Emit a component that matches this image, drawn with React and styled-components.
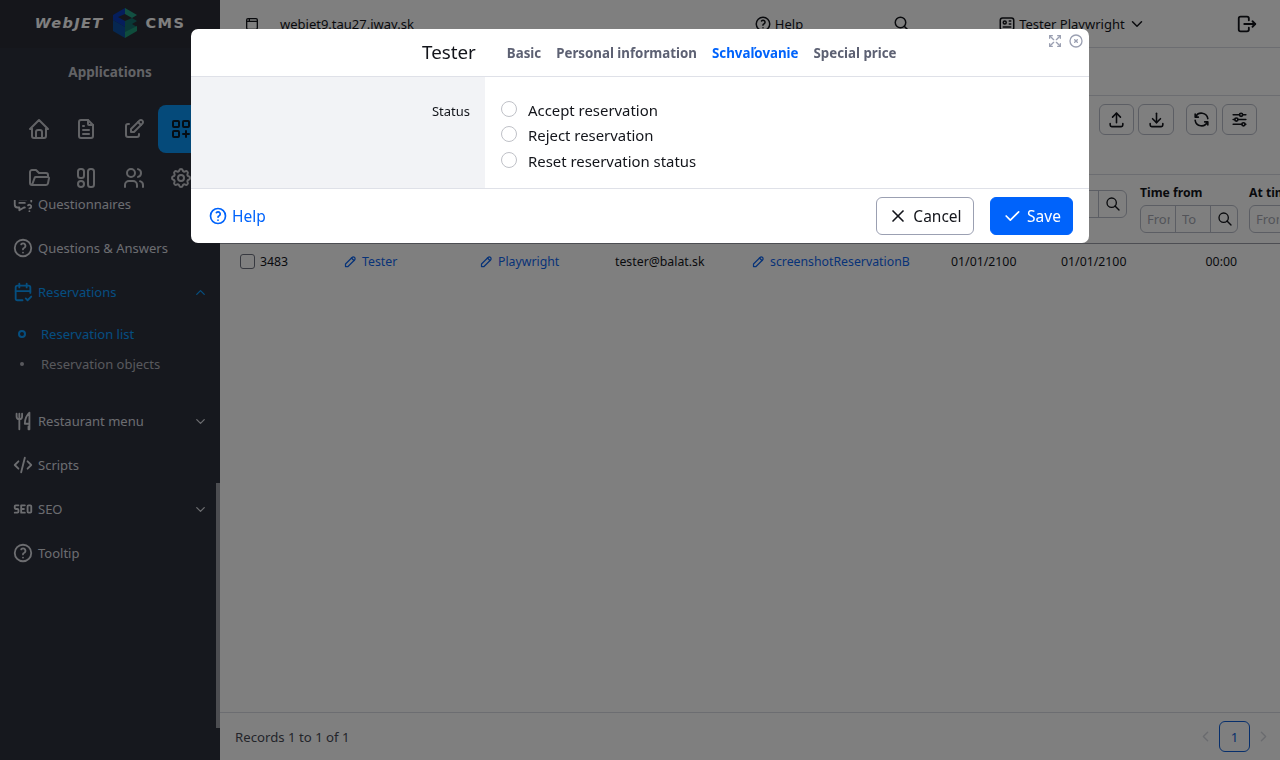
import React from "react";
import styled, { createGlobalStyle } from "styled-components";
import {
  TbHome, TbFileText, TbEdit, TbLayoutGridAdd, TbFolderOpen, TbUsers, TbSettings,
  TbHelp, TbCalendarCheck, TbChevronUp, TbChevronDown, TbChevronLeft, TbChevronRight,
  TbToolsKitchen2, TbCode, TbSeo, TbBrowser, TbSearch, TbId, TbLogout, TbUpload,
  TbDownload, TbRefresh, TbAdjustmentsHorizontal, TbPencil, TbX, TbCheck,
  TbArrowsMaximize, TbCircleX, TbMessageQuestion,
} from "react-icons/tb";

const GlobalStyle = createGlobalStyle`
  html, body { margin: 0; height: 100%; overflow: hidden; }
  body { font-family: "Noto Sans", "Liberation Sans", sans-serif; color: #13151b; background: #fff; }
  * { box-sizing: border-box; }
`;

const Page = styled.div`
  display: flex;
  width: 1280px;
  height: 760px;
  overflow: hidden;
`;

const Sidebar = styled.aside`
  width: 220px;
  height: 760px;
  flex: none;
  background: #2d303c;
  display: flex;
  flex-direction: column;
  position: relative;
`;

const LogoBar = styled.div`
  height: 48px;
  background: #2a2d37;
  display: flex;
  align-items: center;
  justify-content: center;
  gap: 8px;
  color: #fff;
  padding-bottom: 2px;
`;

const LogoText = styled.span`
  font-family: "DejaVu Sans", sans-serif;
  font-weight: 700;
  font-style: ${(p) => (p.$italic ? "italic" : "normal")};
  font-size: 14.5px;
  letter-spacing: ${(p) => (p.$italic ? 1.4 : 1.4)}px;
`;

const SideTitle = styled.div`
  height: 48px;
  text-align: center;
  font-size: 13.5px;
  font-weight: 700;
  color: #c4c6cc;
  line-height: 48px;
`;

const IconGrid = styled.div`
  display: grid;
  grid-template-columns: repeat(4, 47.5px);
  grid-auto-rows: 48px;
  justify-content: start;
  margin-left: 15px;
  margin-top: 9px;
  row-gap: 1px;
  height: 95px;
`;

const IconCell = styled.div`
  display: flex;
  align-items: center;
  justify-content: center;
  border-radius: 8px;
  color: ${(p) => (p.$active ? "#0b1a2a" : "#c4c6cc")};
  background: ${(p) => (p.$active ? "#0b95f5" : "transparent")};
  font-size: 24px;
`;

const Menu = styled.nav`
  flex: 1;
  overflow: hidden;
`;

const MenuItem = styled.div`
  height: 44px;
  display: flex;
  align-items: center;
  padding: 0 12px;
  gap: 4px;
  font-size: 13px;
  color: ${(p) => (p.$active ? "#0b9dff" : "#d8dae0")};

  svg:first-child { font-size: 22px; flex: none; }
  svg:last-child:not(:first-child) { margin-left: auto; font-size: 15px; }
`;

const ClippedItem = styled(MenuItem)`
  height: 13px;
  overflow: hidden;
  align-items: flex-end;
  margin-bottom: 13px;
`;

const SubItem = styled.div`
  height: 30px;
  display: flex;
  align-items: center;
  font-size: 13px;
  color: ${(p) => (p.$active ? "#0b9dff" : "#b0b2ba")};
  padding-left: 18px;
  gap: 15px;
`;

const SubDot = styled.span`
  width: ${(p) => (p.$active ? 8 : 4)}px;
  height: ${(p) => (p.$active ? 8 : 4)}px;
  margin: 0 ${(p) => (p.$active ? 0 : 2)}px;
  border-radius: 50%;
  background: ${(p) => (p.$active ? "transparent" : "#b0b2ba")};
  border: ${(p) => (p.$active ? "2px solid #0b9dff" : "none")};
`;

const SubList = styled.div`
  padding: 5px 0 20px;
`;

const Thumb = styled.div`
  position: absolute;
  right: 0;
  top: 483px;
  width: 4px;
  height: 245px;
  background: #999ba3;
`;

const Main = styled.main`
  flex: 1;
  min-width: 0;
  display: flex;
  flex-direction: column;
  background: #fff;
  overflow: hidden;
`;

const TopBar = styled.header`
  height: 48px;
  flex: none;
  display: flex;
  align-items: center;
  padding-left: 24px;
  border-bottom: 1px solid #d9dbe3;
  font-size: 13px;
  white-space: nowrap;
`;

const TopItem = styled.div`
  display: flex;
  align-items: center;
  gap: ${(p) => p.$gap || 5}px;
  margin-left: ${(p) => p.$ml || 0}px;
  flex: none;
  svg { font-size: ${(p) => p.$icon || 18}px; flex: none; }
`;

const SubBar = styled.div`
  height: 48px;
  flex: none;
  border-bottom: 1px solid #d9dbe3;
`;

const ToolBar = styled.div`
  height: 79px;
  flex: none;
  display: flex;
  justify-content: flex-end;
  padding: 8px 23px 0 0;
  gap: 4px;
  border-bottom: 1px solid #d9dbe3;
`;

const ToolButton = styled.button`
  width: ${(p) => p.$w}px;
  height: 31px;
  padding: 0;
  background: transparent;
  color: #13151b;
  border: 1px solid #b9bdc9;
  border-radius: 6px;
  display: flex;
  align-items: center;
  justify-content: center;
  font-size: 19px;
  margin-left: ${(p) => p.$ml || 0}px;
`;

const Row = styled.div`
  display: grid;
  grid-template-columns: 105px 136px 134px 138px 198px 110px 79px 109px 109px;
  padding-left: 20px;
  width: max-content;
  flex: none;
`;

const HeadRow = styled(Row)`
  height: 69px;
  padding-top: 10px;
  border-bottom: 1px solid #9a9da6;
  width: 100%;
`;

const HeadCell = styled.div`
  font-size: 12.2px;
  font-weight: 700;
  line-height: 15px;
  white-space: nowrap;
`;

const FilterGroup = styled.div`
  display: flex;
  width: ${(p) => p.$w}px;
  height: 28px;
  margin-top: 5px;
  border: 1px solid #b9bdc9;
  border-radius: 6px;
  overflow: hidden;
`;

const FilterInput = styled.div`
  width: 35px;
  flex: ${(p) => (p.$grow ? 1 : "none")};
  padding-left: 6px;
  border-right: 1px solid #b9bdc9;
`;

const FilterText = styled.div`
  width: 23px;
  overflow: hidden;
  font-size: 13px;
  font-weight: 400;
  line-height: 26px;
  color: #a6a9b3;
`;

const FilterIcon = styled.div`
  width: 27px;
  flex: none;
  display: flex;
  align-items: center;
  justify-content: center;
  font-size: 16px;
`;

const BodyRow = styled(Row)`
  height: 35px;
  align-items: center;
  font-size: 12.3px;
`;

const IdCell = styled.div`
  display: flex;
  align-items: center;
  gap: 5px;
`;

const CheckBox = styled.span`
  width: 15px;
  height: 15px;
  border: 1px solid #6f7380;
  border-radius: 3px;
`;

const LinkCell = styled.div`
  display: flex;
  align-items: center;
  gap: 4px;
  margin-left: -2px;
  color: #0f66f0;
  svg { font-size: 15px; flex: none; }
`;

const TimeCell = styled.div`
  text-align: right;
  padding-right: 12px;
`;

const Filler = styled.div`
  flex: 1;
`;

const Footer = styled.footer`
  height: 48px;
  flex: none;
  display: flex;
  align-items: center;
  justify-content: space-between;
  padding: 0 8px 0 15px;
  border-top: 1px solid #d9dbe3;
  font-size: 13.2px;
  color: #474a55;
`;

const Pager = styled.div`
  display: flex;
  align-items: center;
  gap: 5px;
  color: #d5d7de;
  font-size: 17px;
`;

const PageNum = styled.div`
  width: 31px;
  height: 31px;
  border: 1px solid #0f5fd8;
  border-radius: 6px;
  color: #0f5fd8;
  font-size: 13.2px;
  display: flex;
  align-items: center;
  justify-content: center;
`;

const Overlay = styled.div`
  position: fixed;
  inset: 0;
  background: rgba(0, 0, 0, 0.5);
`;

const Modal = styled.section`
  position: fixed;
  left: 191px;
  top: 29px;
  width: 898px;
  height: 214px;
  background: #fff;
  border-radius: 7px;
  display: flex;
  flex-direction: column;
  overflow: hidden;
`;

const ModalHead = styled.div`
  height: 48px;
  flex: none;
  display: flex;
  align-items: center;
  padding-left: 231px;
  border-bottom: 1px solid #dfe1e8;
  position: relative;
`;

const ModalTitle = styled.div`
  font-size: 18.8px;
  margin: -2px 31px 0 0;
`;

const Tab = styled.div`
  font-size: 13.3px;
  font-weight: 700;
  margin-right: 15px;
  color: ${(p) => (p.$active ? "#0063fb" : "#5d6173")};
`;

const HeadIcons = styled.div`
  position: absolute;
  top: 4px;
  right: 5px;
  display: flex;
  align-items: center;
  gap: 5px;
  color: #9ba0b2;
  font-size: 16px;
`;

const ModalBody = styled.div`
  height: 112px;
  flex: none;
  display: flex;
  border-bottom: 1px solid #dfe1e8;
`;

const LabelCol = styled.div`
  width: 294px;
  flex: none;
  background: #f2f3f6;
  text-align: right;
  padding: 25px 15px 0 0;
  font-size: 13px;
  line-height: 18px;
`;

const FieldCol = styled.div`
  padding: 20px 0 0 16px;
  display: flex;
  flex-direction: column;
`;

const RadioRow = styled.label`
  height: 25.5px;
  display: flex;
  align-items: center;
  gap: 11px;
  font-size: 14.9px;
`;

const Radio = styled.span`
  width: 16px;
  height: 16px;
  border: 1px solid #bfc1c7;
  border-radius: 50%;
  margin-top: -2px;
`;

const ModalFoot = styled.div`
  flex: 1;
  display: flex;
  align-items: center;
  padding: 0 16px 0 17px;
`;

const HelpLink = styled.div`
  display: flex;
  align-items: center;
  gap: 4px;
  color: #0063fb;
  font-size: 15.5px;
  margin-right: auto;
  svg { font-size: 20px; }
`;

const CancelButton = styled.button`
  height: 38px;
  width: 98px;
  display: flex;
  align-items: center;
  justify-content: center;
  gap: 5px;
  padding: 0;
  font: inherit;
  font-size: 15.5px;
  color: #13151b;
  background: #fff;
  border: 1px solid #9ba0b2;
  border-radius: 6px;
  margin-right: 16px;
  svg { font-size: 20px; }
`;

const SaveButton = styled(CancelButton)`
  width: 83px;
  color: #fff;
  background: #0063fb;
  border-color: #0063fb;
  margin-right: 0;
`;

// three stacked layers, blue on the left and teal on the right, notched at the sides
const Hex = () => (
  <svg width="26" height="30" viewBox="0 0 26 30">
    <path d="M13 0l12 7-5 3-7-4z" fill="#24a184" />
    <path d="M13 0L1 7v5l12 7V13L6 9l7-3z" fill="#0a3db8" />
    <path d="M13 13l7-3 5 3-5 3 5 3-12 6z" fill="#14706c" />
    <path d="M1 12l12 7v11L1 23z" fill="#0c4fa0" />
    <path d="M13 30V24l12-6v5z" fill="#1f9a78" />
  </svg>
);

const SplitIcon = () => (
  <svg width="24" height="24" viewBox="0 0 24 24" fill="none" stroke="currentColor" strokeWidth="2">
    <rect x="4" y="3" width="6" height="9" rx="2.5" />
    <rect x="4" y="15" width="6" height="6" rx="3" />
    <rect x="14" y="3" width="6" height="18" rx="2.5" />
  </svg>
);

export default function App() {
  return (
    <>
      <GlobalStyle />
      <Page>
        <Sidebar>
          <LogoBar>
            <LogoText $italic>WebJET</LogoText>
            <Hex />
            <LogoText>CMS</LogoText>
          </LogoBar>
          <SideTitle>Applications</SideTitle>
          <IconGrid>
            <IconCell><TbHome /></IconCell>
            <IconCell><TbFileText /></IconCell>
            <IconCell><TbEdit /></IconCell>
            <IconCell $active><TbLayoutGridAdd /></IconCell>
            <IconCell><TbFolderOpen /></IconCell>
            <IconCell><SplitIcon /></IconCell>
            <IconCell><TbUsers /></IconCell>
            <IconCell><TbSettings /></IconCell>
          </IconGrid>
          <Menu>
            <ClippedItem><TbMessageQuestion />Questionnaires</ClippedItem>
            <MenuItem><TbHelp />Questions &amp; Answers</MenuItem>
            <MenuItem $active><TbCalendarCheck />Reservations<TbChevronUp /></MenuItem>
            <SubList>
              <SubItem $active><SubDot $active />Reservation list</SubItem>
              <SubItem><SubDot />Reservation objects</SubItem>
            </SubList>
            <MenuItem><TbToolsKitchen2 />Restaurant menu<TbChevronDown /></MenuItem>
            <MenuItem><TbCode />Scripts</MenuItem>
            <MenuItem><TbSeo />SEO<TbChevronDown /></MenuItem>
            <MenuItem><TbHelp />Tooltip</MenuItem>
          </Menu>
          <Thumb />
        </Sidebar>
        <Main>
          <TopBar>
            <TopItem $icon={16} $gap={20}><TbBrowser />webjet9.tau27.iway.sk</TopItem>
            <TopItem $ml={340} $gap={3}><TbHelp />Help</TopItem>
            <TopItem $ml={90}><TbSearch /></TopItem>
            <TopItem $ml={87} $gap={3}><TbId />Tester Playwright<TbChevronDown /></TopItem>
            <TopItem $ml={90} $icon={22}><TbLogout /></TopItem>
          </TopBar>
          <SubBar />
          <ToolBar>
            <ToolButton $w={35}><TbUpload /></ToolButton>
            <ToolButton $w={36}><TbDownload /></ToolButton>
            <ToolButton $w={31} $ml={8}><TbRefresh /></ToolButton>
            <ToolButton $w={35} $ml={1}><TbAdjustmentsHorizontal /></ToolButton>
          </ToolBar>
          <HeadRow>
            <HeadCell />
            <HeadCell />
            <HeadCell />
            <HeadCell />
            <HeadCell />
            <HeadCell />
            <HeadCell>
              <FilterGroup $w={66}>
                <FilterInput $grow><FilterText>To</FilterText></FilterInput>
                <FilterIcon><TbSearch /></FilterIcon>
              </FilterGroup>
            </HeadCell>
            <HeadCell>
              Time from
              <FilterGroup $w={98}>
                <FilterInput><FilterText>From</FilterText></FilterInput>
                <FilterInput><FilterText>To</FilterText></FilterInput>
                <FilterIcon><TbSearch /></FilterIcon>
              </FilterGroup>
            </HeadCell>
            <HeadCell>
              At time
              <FilterGroup $w={98}>
                <FilterInput $grow><FilterText>From</FilterText></FilterInput>
              </FilterGroup>
            </HeadCell>
          </HeadRow>
          <BodyRow>
            <IdCell><CheckBox />3483</IdCell>
            <LinkCell><TbPencil />Tester</LinkCell>
            <LinkCell><TbPencil />Playwright</LinkCell>
            <div>tester@balat.sk</div>
            <LinkCell><TbPencil />screenshotReservationB</LinkCell>
            <div>01/01/2100</div>
            <div>01/01/2100</div>
            <TimeCell>00:00</TimeCell>
          </BodyRow>
          <Filler />
          <Footer>
            Records 1 to 1 of 1
            <Pager>
              <TbChevronLeft />
              <PageNum>1</PageNum>
              <TbChevronRight />
            </Pager>
          </Footer>
        </Main>
      </Page>
      <Overlay />
      <Modal>
        <ModalHead>
          <ModalTitle>Tester</ModalTitle>
          <Tab>Basic</Tab>
          <Tab>Personal information</Tab>
          <Tab $active>Schvaľovanie</Tab>
          <Tab>Special price</Tab>
          <HeadIcons><TbArrowsMaximize /><TbCircleX /></HeadIcons>
        </ModalHead>
        <ModalBody>
          <LabelCol>Status</LabelCol>
          <FieldCol>
            <RadioRow><Radio />Accept reservation</RadioRow>
            <RadioRow><Radio />Reject reservation</RadioRow>
            <RadioRow><Radio />Reset reservation status</RadioRow>
          </FieldCol>
        </ModalBody>
        <ModalFoot>
          <HelpLink><TbHelp />Help</HelpLink>
          <CancelButton><TbX />Cancel</CancelButton>
          <SaveButton><TbCheck />Save</SaveButton>
        </ModalFoot>
      </Modal>
    </>
  );
}
